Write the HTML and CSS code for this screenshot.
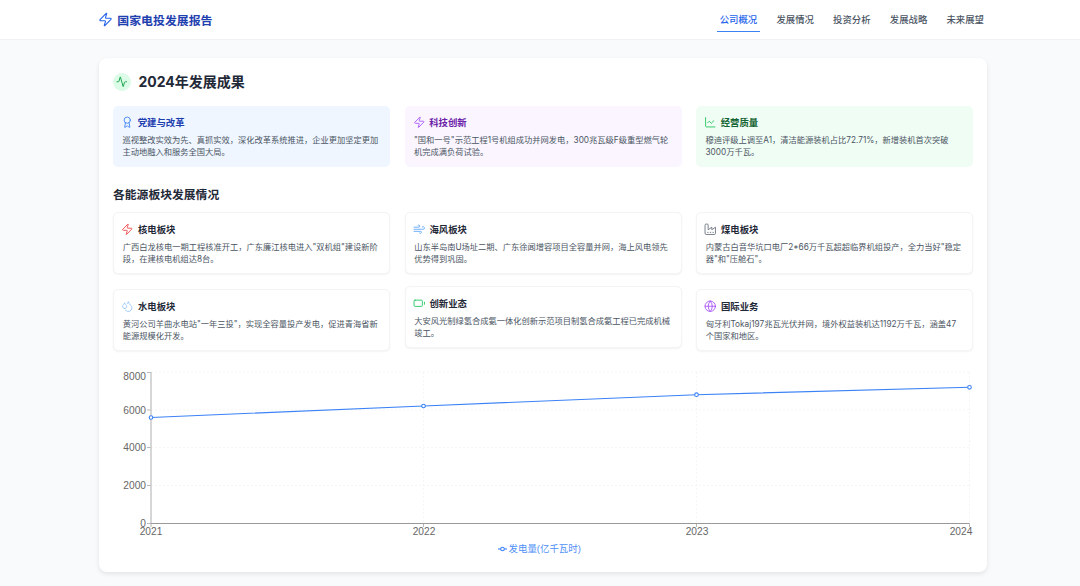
FILE: index.html
```html
<!DOCTYPE html>
<html lang="zh-CN">
<head>
<meta charset="utf-8">
<title>国家电投发展报告</title>
<link rel="stylesheet" href="styles.css">
</head>
<body>
<header class="topbar">
  <div class="topbar-inner">
    <div class="brand">
      <svg class="brand-icon" viewBox="0 0 24 24"><path d="M4 14a1 1 0 0 1-.78-1.63l9.9-10.2a.5.5 0 0 1 .86.46l-1.92 6.02A1 1 0 0 0 13 10h7a1 1 0 0 1 .78 1.63l-9.9 10.2a.5.5 0 0 1-.86-.46l1.92-6.02A1 1 0 0 0 11 14z"/></svg>
      <span>国家电投发展报告</span>
    </div>
    <nav class="nav">
      <a class="nav-link active">公司概况</a>
      <a class="nav-link">发展情况</a>
      <a class="nav-link">投资分析</a>
      <a class="nav-link">发展战略</a>
      <a class="nav-link">未来展望</a>
    </nav>
  </div>
</header>
<main class="main">
  <section class="panel">
    <div class="panel-head">
      <span class="badge"><svg viewBox="0 0 24 24"><path d="M22 12h-2.48a2 2 0 0 0-1.93 1.46l-2.35 8.36a.25.25 0 0 1-.48 0L9.24 2.18a.25.25 0 0 0-.48 0l-2.35 8.36A2 2 0 0 1 4.49 12H2"/></svg></span>
      <h1 class="panel-title">2024年发展成果</h1>
    </div>
    <div class="highlights">
      <article class="hl hl-blue">
        <h3 class="card-title"><svg class="ico" viewBox="0 0 24 24"><path d="m15.477 12.89 1.515 8.526a.5.5 0 0 1-.81.47l-3.58-2.687a1 1 0 0 0-1.197 0l-3.586 2.686a.5.5 0 0 1-.81-.469l1.514-8.526"/><circle cx="12" cy="8" r="6"/></svg>党建与改革</h3>
        <p class="card-text">巡视整改实效为先、真抓实效，深化改革系统推进，企业更加坚定更加主动地融入和服务全国大局。</p>
      </article>
      <article class="hl hl-purple">
        <h3 class="card-title"><svg class="ico" viewBox="0 0 24 24"><path d="M4 14a1 1 0 0 1-.78-1.63l9.9-10.2a.5.5 0 0 1 .86.46l-1.92 6.02A1 1 0 0 0 13 10h7a1 1 0 0 1 .78 1.63l-9.9 10.2a.5.5 0 0 1-.86-.46l1.92-6.02A1 1 0 0 0 11 14z"/></svg>科技创新</h3>
        <p class="card-text">"国和一号"示范工程1号机组成功并网发电，300兆瓦级F级重型燃气轮机完成满负荷试验。</p>
      </article>
      <article class="hl hl-green">
        <h3 class="card-title"><svg class="ico" viewBox="0 0 24 24"><path d="M3 3v16a2 2 0 0 0 2 2h16"/><path d="m19 9-5 5-4-4-3 3"/></svg>经营质量</h3>
        <p class="card-text">穆迪评级上调至A1，清洁能源装机占比72.71%，新增装机首次突破3000万千瓦。</p>
      </article>
    </div>
    <h2 class="section-title">各能源板块发展情况</h2>
    <div class="sectors">
      <div class="col">
        <article class="card">
          <h3 class="card-title"><svg class="ico i-red" viewBox="0 0 24 24"><path d="M4 14a1 1 0 0 1-.78-1.63l9.9-10.2a.5.5 0 0 1 .86.46l-1.92 6.02A1 1 0 0 0 13 10h7a1 1 0 0 1 .78 1.63l-9.9 10.2a.5.5 0 0 1-.86-.46l1.92-6.02A1 1 0 0 0 11 14z"/></svg>核电板块</h3>
          <p class="card-text">广西白龙核电一期工程核准开工，广东廉江核电进入"双机组"建设新阶段，在建核电机组达8台。</p>
        </article>
        <article class="card">
          <h3 class="card-title"><svg class="ico i-sky" viewBox="0 0 24 24"><path d="M7 16.3c2.2 0 4-1.83 4-4.05 0-1.16-.57-2.26-1.71-3.19S7.29 6.75 7 5.3c-.29 1.45-1.14 2.84-2.29 3.76S3 11.1 3 12.25c0 2.22 1.8 4.05 4 4.05z"/><path d="M12.56 6.6A10.97 10.97 0 0 0 14 3.02c.5 2.5 2 4.9 4 6.5s3 3.5 3 5.5a6.98 6.98 0 0 1-11.91 4.97"/></svg>水电板块</h3>
          <p class="card-text">黄河公司羊曲水电站"一年三投"，实现全容量投产发电，促进青海省新能源规模化开发。</p>
        </article>
      </div>
      <div class="col col-tight">
        <article class="card">
          <h3 class="card-title"><svg class="ico i-wind" viewBox="0 0 24 24"><path d="M17.7 7.7a2.5 2.5 0 1 1 1.8 4.3H2"/><path d="M9.6 4.6A2 2 0 1 1 11 8H2"/><path d="M12.6 19.4A2 2 0 1 0 14 16H2"/></svg>海风板块</h3>
          <p class="card-text">山东半岛南U场址二期、广东徐闻增容项目全容量并网，海上风电领先优势得到巩固。</p>
        </article>
        <article class="card">
          <h3 class="card-title"><svg class="ico i-green" viewBox="0 0 24 24"><path d="M22 14v-4"/><rect x="2" y="6" width="16" height="12" rx="2"/></svg>创新业态</h3>
          <p class="card-text">大安风光制绿氢合成氨一体化创新示范项目制氢合成氨工程已完成机械竣工。</p>
        </article>
      </div>
      <div class="col">
        <article class="card">
          <h3 class="card-title"><svg class="ico i-gray" viewBox="0 0 24 24"><path d="M2 20a2 2 0 0 0 2 2h16a2 2 0 0 0 2-2V8l-7 5V8l-7 5V4a2 2 0 0 0-2-2H4a2 2 0 0 0-2 2Z"/><path d="M17 18h1"/><path d="M12 18h1"/><path d="M7 18h1"/></svg>煤电板块</h3>
          <p class="card-text">内蒙古白音华坑口电厂2*66万千瓦超超临界机组投产，全力当好"稳定器"和"压舱石"。</p>
        </article>
        <article class="card">
          <h3 class="card-title"><svg class="ico i-violet" viewBox="0 0 24 24"><circle cx="12" cy="12" r="10"/><path d="M12 2a14.5 14.5 0 0 0 0 20 14.5 14.5 0 0 0 0-20"/><path d="M2 12h20"/></svg>国际业务</h3>
          <p class="card-text">匈牙利Tokaj197兆瓦光伏并网，境外权益装机达1192万千瓦，涵盖47个国家和地区。</p>
        </article>
      </div>
    </div>
    <svg class="chart" viewBox="113 365 860 193">
      <g class="grid">
        <line x1="151" y1="372" x2="969.5" y2="372"/>
        <line x1="151" y1="410" x2="969.5" y2="410"/>
        <line x1="151" y1="447.5" x2="969.5" y2="447.5"/>
        <line x1="151" y1="485.5" x2="969.5" y2="485.5"/>
        <line x1="423.5" y1="372" x2="423.5" y2="523.5"/>
        <line x1="696.5" y1="372" x2="696.5" y2="523.5"/>
        <line x1="969.5" y1="372" x2="969.5" y2="523.5"/>
      </g>
      <g class="ticks">
        <line x1="147" y1="372.5" x2="151" y2="372.5"/>
        <line x1="147" y1="410" x2="151" y2="410"/>
        <line x1="147" y1="447.5" x2="151" y2="447.5"/>
        <line x1="147" y1="485.5" x2="151" y2="485.5"/>
        <line x1="147" y1="523.5" x2="151" y2="523.5"/>
        <line x1="151" y1="523.5" x2="151" y2="527"/>
        <line x1="423.5" y1="523.5" x2="423.5" y2="527"/>
        <line x1="696.5" y1="523.5" x2="696.5" y2="527"/>
        <line x1="969.5" y1="523.5" x2="969.5" y2="527"/>
      </g>
      <line class="axis-y" x1="151" y1="372" x2="151" y2="523.5"/>
      <line class="axis-x" x1="151" y1="523.5" x2="969.5" y2="523.5"/>
      <g class="labels-y">
        <text x="146" y="380">8000</text>
        <text x="146" y="413.5">6000</text>
        <text x="146" y="451.3">4000</text>
        <text x="146" y="489">2000</text>
        <text x="146" y="526.8">0</text>
      </g>
      <g class="labels-x">
        <text x="151" y="535">2021</text>
        <text x="424" y="535">2022</text>
        <text x="697" y="535">2023</text>
        <text x="961" y="535">2024</text>
      </g>
      <polyline class="series" points="151,417.5 423.5,406 696.5,394.7 969.5,387.3"/>
      <g class="dots">
        <circle cx="151" cy="417.5" r="1.8"/>
        <circle cx="423.5" cy="406" r="1.8"/>
        <circle cx="696.5" cy="394.7" r="1.8"/>
        <circle cx="969.5" cy="387.3" r="1.8"/>
      </g>
      <line class="legend-line" x1="498" y1="549" x2="507" y2="549"/>
      <circle class="legend-dot" cx="502.5" cy="549" r="1.8"/>
      <text class="legend-text" x="508.5" y="552.3">发电量(亿千瓦时)</text>
    </svg>
  </section>
</main>
</body>
</html>
```
FILE: styles.css
```css
* { box-sizing: border-box; }
html, body { margin: 0; padding: 0; }
body {
  height: 586px;
  overflow: hidden;
  background: #f9fafb;
  color: #1f2937;
  font-family: Inter, "Noto Sans CJK SC", sans-serif;
}
svg { display: block; }
h1, h2, h3, p { margin: 0; }

.topbar {
  height: 40px;
  background: #fff;
  border-bottom: 1px solid #f0f1f4;
}
.topbar-inner {
  width: 888px;
  height: 39px;
  margin-left: 99px;
  display: flex;
  align-items: center;
  justify-content: space-between;
}
.brand {
  display: flex;
  align-items: center;
  gap: 4.5px;
  color: #1e40af;
  font-size: 11.9px;
  font-weight: 600;
}
.brand-icon {
  width: 15px;
  height: 15px;
  margin-left: -1.2px;
  fill: none;
  stroke: #2563eb;
  stroke-width: 1.8;
  stroke-linecap: round;
  stroke-linejoin: round;
}
.nav { display: flex; gap: 13.2px; }
.nav-link {
  padding: 5px 3px;
  border-top: 1.5px solid transparent;
  border-bottom: 1.5px solid transparent;
  color: #4b5563;
  font-size: 9.4px;
  font-weight: 500;
  line-height: 13px;
}
.nav-link.active {
  color: #2563eb;
  border-bottom-color: #3b82f6;
}

.main { padding: 18px 0 0 99px; }
.panel {
  width: 888px;
  height: 514px;
  padding: 15px 14px 14px;
  background: #fff;
  border-radius: 8px;
  box-shadow: 0 2px 5px rgba(0, 0, 0, .09);
}
.panel-head {
  display: flex;
  align-items: center;
  gap: 7.5px;
  height: 18px;
}
.badge {
  width: 18px;
  height: 18px;
  border-radius: 50%;
  background: #dcfce7;
  display: flex;
  align-items: center;
  justify-content: center;
}
.badge svg {
  width: 11.5px;
  height: 11.5px;
  fill: none;
  stroke: #16a34a;
  stroke-width: 2;
  stroke-linecap: round;
  stroke-linejoin: round;
}
.panel-title { font-size: 14px; font-weight: 700; line-height: 18px; }

.highlights {
  display: grid;
  grid-template-columns: repeat(3, 1fr);
  gap: 14.5px;
  margin-top: 15px;
}
.hl {
  height: 61px;
  padding: 9.5px;
  border-radius: 5px;
}
.hl-blue { background: #eff6ff; }
.hl-purple { background: #faf5ff; }
.hl-green { background: #f0fdf4; }

.card-title {
  display: flex;
  align-items: center;
  gap: 4.2px;
  height: 13px;
  margin-bottom: 5px;
  font-size: 9.4px;
  font-weight: 600;
  line-height: 13px;
}
.hl-blue .card-title { color: #1e40af; }
.hl-purple .card-title { color: #6b21a8; }
.hl-green .card-title { color: #166534; }
.ico {
  width: 12.5px;
  height: 12.5px;
  margin-left: -1.5px;
  flex: none;
  fill: none;
  stroke: currentColor;
  stroke-width: 1.7;
  stroke-linecap: round;
  stroke-linejoin: round;
}
.hl-blue .ico { stroke: #3b82f6; }
.hl-purple .ico { stroke: #a855f7; }
.hl-green .ico { stroke: #22c55e; }
.i-red { stroke: #ef4444; }
.i-sky { stroke: #93c5fd; }
.i-wind { stroke: #60a5fa; }
.i-green { stroke: #22c55e; }
.i-gray { stroke: #6b7280; }
.i-violet { stroke: #a855f7; }

.card-text {
  color: #4b5563;
  font-size: 8.25px;
  line-height: 12px;
}

.section-title {
  margin-top: 20px;
  font-size: 11.8px;
  font-weight: 600;
  line-height: 16px;
}
.sectors {
  display: grid;
  grid-template-columns: repeat(3, 1fr);
  gap: 14.5px;
  margin-top: 9px;
}
.col {
  display: flex;
  flex-direction: column;
  gap: 15px;
}
.col-tight { gap: 12px; }
.card {
  height: 62px;
  padding: 9.5px 8.7px 8px;
  background: #fff;
  border: 1px solid #f3f4f6;
  border-radius: 5px;
  box-shadow: 0 1px 2px rgba(0, 0, 0, .05);
}

.chart {
  width: 860px;
  height: 193px;
  margin-top: 14px;
  overflow: visible;
  font-family: "Liberation Sans", "Noto Sans CJK SC", sans-serif;
}
.grid line {
  stroke: #f0f0f0;
  stroke-width: .7;
  stroke-dasharray: 2 2;
}
.ticks line { stroke: #999999; stroke-width: .7; }
.axis-y { stroke: #c8c8c8; stroke-width: 1.5; }
.axis-x { stroke: #999999; stroke-width: 1; }
.labels-y text, .labels-x text {
  fill: #666666;
  font-size: 10.2px;
}
.labels-y text { text-anchor: end; }
.labels-x text { text-anchor: middle; }
.series {
  fill: none;
  stroke: #3b82f6;
  stroke-width: 1.1;
}
.dots circle {
  fill: #fff;
  stroke: #3b82f6;
  stroke-width: 1.1;
}
.legend-line { stroke: #3b82f6; stroke-width: 1.1; }
.legend-dot { fill: #fff; stroke: #3b82f6; stroke-width: 1.1; }
.legend-text { fill: #4f8ff7; font-size: 9.45px; }
```
